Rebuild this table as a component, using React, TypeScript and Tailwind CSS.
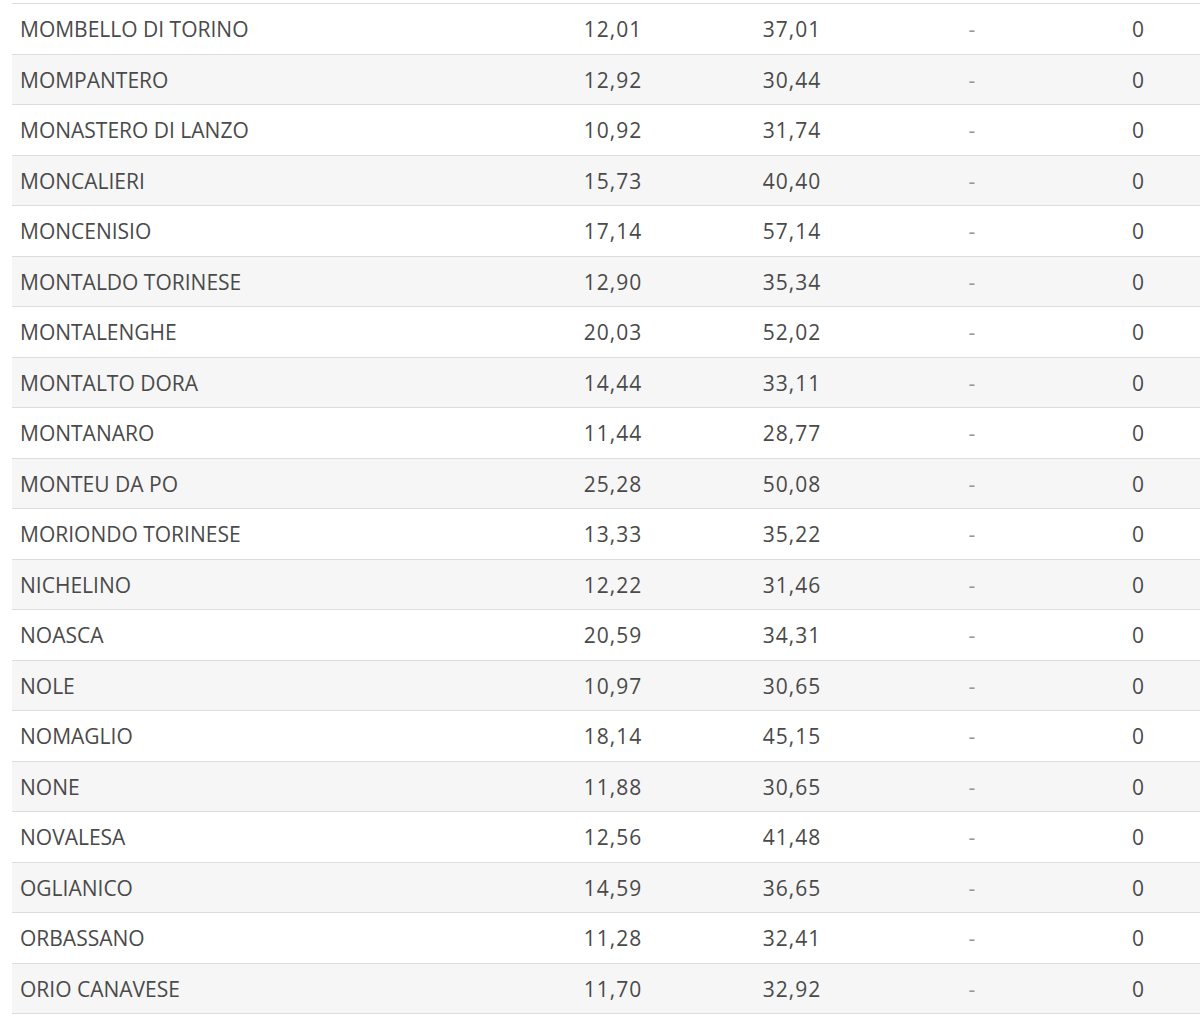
const rows: [string, string, string][] = [
  ["MOMBELLO DI TORINO", "12,01", "37,01"],
  ["MOMPANTERO", "12,92", "30,44"],
  ["MONASTERO DI LANZO", "10,92", "31,74"],
  ["MONCALIERI", "15,73", "40,40"],
  ["MONCENISIO", "17,14", "57,14"],
  ["MONTALDO TORINESE", "12,90", "35,34"],
  ["MONTALENGHE", "20,03", "52,02"],
  ["MONTALTO DORA", "14,44", "33,11"],
  ["MONTANARO", "11,44", "28,77"],
  ["MONTEU DA PO", "25,28", "50,08"],
  ["MORIONDO TORINESE", "13,33", "35,22"],
  ["NICHELINO", "12,22", "31,46"],
  ["NOASCA", "20,59", "34,31"],
  ["NOLE", "10,97", "30,65"],
  ["NOMAGLIO", "18,14", "45,15"],
  ["NONE", "11,88", "30,65"],
  ["NOVALESA", "12,56", "41,48"],
  ["OGLIANICO", "14,59", "36,65"],
  ["ORBASSANO", "11,28", "32,41"],
  ["ORIO CANAVESE", "11,70", "32,92"],
];

export default function App() {
  return (
    <div
      className="w-[1200px] h-[1017px] overflow-hidden bg-white pt-[3px] pl-[12px]"
      style={{ fontFamily: '"Open Sans", "Noto Sans", sans-serif' }}
    >
      <div className="w-[1201px] border-t border-[#dddddd] text-[21px] text-[#4a4a4a]">
        {rows.map(([name, a, b], i) => (
          <div
            key={name}
            className={`flex items-center pt-[2px] h-[50.5px] border-b border-[#dddddd] ${
              i % 2 === 1 ? "bg-[#f6f6f6]" : "bg-white"
            }`}
          >
            <div className="w-[511px] pl-[8px]">{name}</div>
            <div className="w-[180px] text-center tracking-[1px]">{a}</div>
            <div className="w-[178px] text-center tracking-[1px]">{b}</div>
            <div className="w-[182px] text-center text-[#999]">-</div>
            <div className="w-[150px] text-center">0</div>
          </div>
        ))}
      </div>
    </div>
  );
}
